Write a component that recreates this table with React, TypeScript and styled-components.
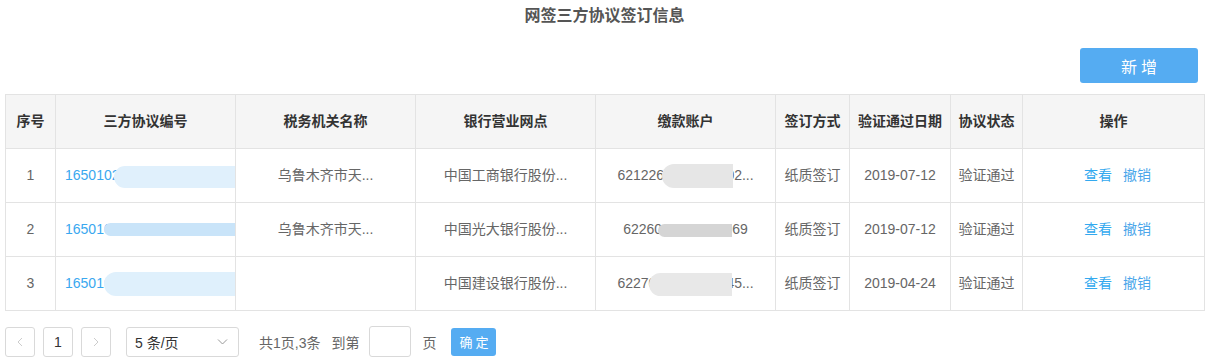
import React from "react";
import styled, { createGlobalStyle } from "styled-components";

const GlobalStyle = createGlobalStyle`
  body {
    margin: 0;
    background: #fff;
    font-family: "Liberation Sans", Arial, "Noto Sans CJK SC", sans-serif;
  }
`;

const Page = styled.div`
  width: 1210px;
  box-sizing: border-box;
  padding: 0 6px 0 5px;
`;

const Title = styled.h2`
  margin: 0;
  padding-top: 6px;
  height: 30px;
  line-height: 20px;
  text-align: center;
  font-size: 16px;
  font-weight: bold;
  color: #555;
`;

const Toolbar = styled.div`
  display: flex;
  justify-content: flex-end;
  padding: 12px 6px 11px 0;
`;

const AddButton = styled.button`
  width: 118px;
  height: 35px;
  border: none;
  border-radius: 3px;
  background: #55acf2;
  color: #fff;
  font-size: 16px;
  letter-spacing: 4px;
  text-indent: 4px;
  font-family: inherit;
`;

const Table = styled.table`
  width: 1199px;
  border-collapse: collapse;
  table-layout: fixed;
  font-size: 14px;
  line-height: 16px;
`;

const Th = styled.th`
  height: 51px;
  border: 1px solid #e3e3e3;
  background: #f5f5f5;
  color: #333;
  font-weight: bold;
  text-align: center;
  padding: 0 0 2px;
`;

const Td = styled.td<{ $left?: boolean; $link?: boolean }>`
  position: relative;
  height: 51px;
  border: 1px solid #e3e3e3;
  color: ${(p) => (p.$link ? "#3aa8ef" : "#666")};
  text-align: ${(p) => (p.$left ? "left" : "center")};
  padding: ${(p) => (p.$left ? "0 0 2px 9px" : "0 0 2px")};
  white-space: nowrap;
  overflow: hidden;
`;

const Mask = styled.span<{ $x: number; $y: number; $w: number; $h: number; $c: string }>`
  position: absolute;
  left: ${(p) => p.$x}px;
  top: ${(p) => p.$y}px;
  width: ${(p) => p.$w}px;
  height: ${(p) => p.$h}px;
  background: ${(p) => p.$c};
  border-radius: 12px 0 0 12px;
`;

const Actions = styled.div`
  display: flex;
  justify-content: center;
  gap: 11px;
  padding-left: 8px;
`;

const Action = styled.a<{ $soft?: boolean }>`
  color: ${(p) => (p.$soft ? "#4ba6ea" : "#33a9ef")};
  text-decoration: none;
`;

const Pager = styled.div`
  display: flex;
  align-items: center;
  margin-top: 15px;
  font-size: 14px;
  color: #666;
`;

const PageBox = styled.div<{ $muted?: boolean }>`
  width: 28px;
  height: 28px;
  border: 1px solid #d9d9d9;
  border-radius: 3px;
  display: flex;
  align-items: center;
  justify-content: center;
  margin-right: 8px;
  color: ${(p) => (p.$muted ? "#ccc" : "#333")};
`;

const Select = styled.div`
  height: 28px;
  border: 1px solid #d9d9d9;
  border-radius: 3px;
  display: flex;
  align-items: center;
  justify-content: space-between;
  padding: 0 10px 0 8px;
  width: 93px;
  margin-left: 7px;
  color: #333;
`;

const PagerText = styled.span<{ $gap: number }>`
  margin-left: ${(p) => p.$gap}px;
`;

const JumpInput = styled.div`
  width: 40px;
  height: 29px;
  border: 1px solid #d9d9d9;
  border-radius: 3px;
  margin-left: 10px;
`;

const OkButton = styled.button`
  margin-left: 15px;
  width: 45px;
  height: 28px;
  border: none;
  border-radius: 3px;
  background: #55acf2;
  color: #fff;
  font-size: 13px;
  letter-spacing: 3px;
  text-indent: 3px;
  font-family: inherit;
  padding: 0;
`;

const Chevron = ({ dir }: { dir: "l" | "r" | "d" }) => {
  const d = dir === "l" ? "M7 2 L3 6 L7 10" : dir === "r" ? "M3 2 L7 6 L3 10" : "M1 3.5 L5.5 8 L10 3.5";
  return (
    <svg width="11" height="12" viewBox="0 0 11 12" fill="none">
      <path d={d} stroke={dir === "d" ? "#999" : "#ccc"} strokeWidth="1" />
    </svg>
  );
};

const headers = ["序号", "三方协议编号", "税务机关名称", "银行营业网点", "缴款账户", "签订方式", "验证通过日期", "协议状态", "操作"];
const widths = [50, 180, 180, 180, 180, 74, 101, 72, 182];

const rows = [
  {
    no: "1", code: "1650102", tax: "乌鲁木齐市天...", bank: "中国工商银行股份...", acct: "6212260000000002...",
    date: "2019-07-12",
    m1: { x: 58, y: 17, w: 125, h: 22, c: "#e0f0fc" },
    m2: { x: 66, y: 15, w: 71, h: 24, c: "#e6e6e6" },
  },
  {
    no: "2", code: "1650100", tax: "乌鲁木齐市天...", bank: "中国光大银行股份...", acct: "6226000000000069",
    date: "2019-07-12",
    m1: { x: 48, y: 20, w: 135, h: 13, c: "#c9e4f9" },
    m2: { x: 62, y: 21, w: 74, h: 13, c: "#d5d5d5" },
  },
  {
    no: "3", code: "1650100", tax: "", bank: "中国建设银行股份...", acct: "6227000000000045...",
    date: "2019-04-24",
    m1: { x: 48, y: 15, w: 135, h: 24, c: "#dff0fc" },
    m2: { x: 53, y: 16, w: 83, h: 23, c: "#e8e8e8" },
  },
];

export default function App() {
  return (
    <Page>
      <GlobalStyle />
      <Title>网签三方协议签订信息</Title>
      <Toolbar>
        <AddButton>新增</AddButton>
      </Toolbar>
      <Table>
        <colgroup>
          {widths.map((w, i) => (
            <col key={i} style={{ width: w }} />
          ))}
        </colgroup>
        <thead>
          <tr>
            {headers.map((h) => (
              <Th key={h}>{h}</Th>
            ))}
          </tr>
        </thead>
        <tbody>
          {rows.map((r) => (
            <tr key={r.no}>
              <Td>{r.no}</Td>
              <Td $left $link>
                {r.code}
                <Mask $x={r.m1.x} $y={r.m1.y} $w={r.m1.w} $h={r.m1.h} $c={r.m1.c} />
              </Td>
              <Td>{r.tax}</Td>
              <Td>{r.bank}</Td>
              <Td>
                {r.acct}
                <Mask $x={r.m2.x} $y={r.m2.y} $w={r.m2.w} $h={r.m2.h} $c={r.m2.c} />
              </Td>
              <Td>纸质签订</Td>
              <Td>{r.date}</Td>
              <Td>验证通过</Td>
              <Td>
                <Actions>
                  <Action>查看</Action>
                  <Action $soft>撤销</Action>
                </Actions>
              </Td>
            </tr>
          ))}
        </tbody>
      </Table>
      <Pager>
        <PageBox $muted>
          <Chevron dir="l" />
        </PageBox>
        <PageBox>1</PageBox>
        <PageBox $muted>
          <Chevron dir="r" />
        </PageBox>
        <Select>
          <span>5 条/页</span>
          <Chevron dir="d" />
        </Select>
        <PagerText $gap={20}>共1页,3条</PagerText>
        <PagerText $gap={11}>到第</PagerText>
        <JumpInput />
        <PagerText $gap={11}>页</PagerText>
        <OkButton>确定</OkButton>
      </Pager>
    </Page>
  );
}
